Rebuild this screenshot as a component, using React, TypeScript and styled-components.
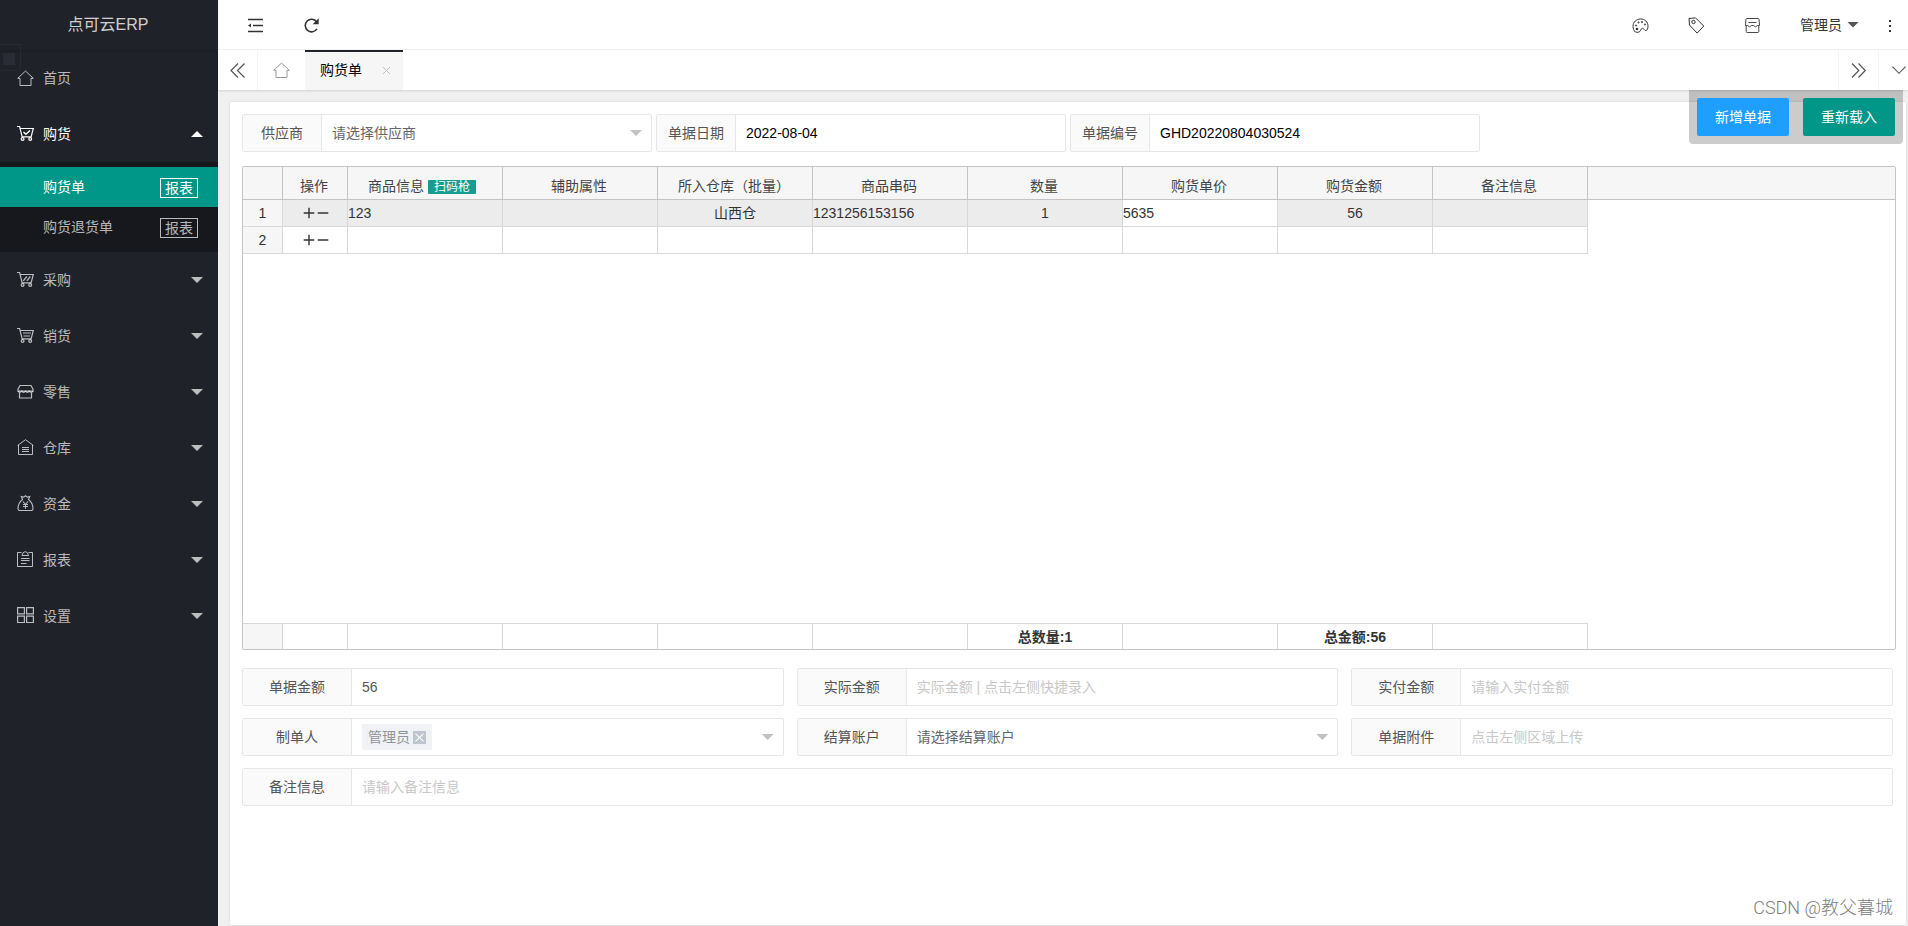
import React from "react";
import styled, { createGlobalStyle, css } from "styled-components";

const GlobalStyle = createGlobalStyle`
  * { box-sizing: border-box; }
  body {
    margin: 0;
    font: 14px/24px "Liberation Sans", "Noto Sans CJK SC", sans-serif;
    color: #333;
    background: #f0f0f0;
  }
  button, input, select { font: inherit; color: inherit; margin: 0; }
  a { color: inherit; text-decoration: none; }
  ul { list-style: none; margin: 0; padding: 0; }
  svg { display: block; flex: none; }
`;

const TEAL = "#009688";

/* ---------- page frame ---------- */

const Page = styled.div`
  display: flex;
  min-height: 100vh;
`;

const Sidebar = styled.aside`
  position: relative;
  flex: 0 0 218px;
  background: #20222a;
  color: rgba(255, 255, 255, 0.7);
`;

const Brand = styled.h1`
  margin: 0;
  height: 50px;
  padding-right: 2px;
  font-size: 16px;
  font-weight: 400;
  line-height: 50px;
  text-align: center;
  color: rgba(255, 255, 255, 0.8);
  box-shadow: 0 1px 2px 0 rgba(0, 0, 0, 0.15);
`;

const DragHandle = styled.div`
  position: absolute;
  top: 44px;
  left: 0;
  width: 21px;
  height: 27px;
  padding: 8px 0 0 3px;
  border: 1px solid #282a32;
  border-left: 0;
  border-radius: 0 0 4px 0;
  &::before {
    content: "";
    display: block;
    width: 12px;
    height: 12px;
    background: #2a2c35;
  }
`;

const Main = styled.main`
  flex: 1;
  min-width: 0;
  display: flex;
  flex-direction: column;
`;

/* ---------- side menu ---------- */

const MenuLink = styled.a<{ $open?: boolean }>`
  display: flex;
  align-items: center;
  gap: 9px;
  height: 56px;
  padding: 0 15px 0 17px;
  color: ${(p) => (p.$open ? "#fff" : "inherit")};
  svg { margin-bottom: 2px; }
`;

const MenuText = styled.span`
  flex: 1;
`;

const Caret = styled.i<{ $up?: boolean; $color?: string }>`
  flex: none;
  width: 12px;
  height: 6px;
  background: ${(p) => p.$color || "currentColor"};
  clip-path: ${(p) => (p.$up ? "polygon(50% 0, 100% 100%, 0 100%)" : "polygon(0 0, 100% 0, 50% 100%)")};
`;

const SubMenu = styled.ul`
  padding: 5px 0;
  background: #17181d;
`;

const SubItem = styled.li<{ $active?: boolean }>`
  display: flex;
  align-items: center;
  justify-content: space-between;
  height: 40px;
  padding: 0 20px 0 43px;
  ${(p) => p.$active && css`background: ${TEAL}; color: #fff;`}
`;

const ReportLink = styled.a`
  margin-top: 2px;
  padding: 0 4px;
  border: 1px solid currentColor;
  line-height: 18px;
`;

/* ---------- header and tabs ---------- */

const Header = styled.header`
  display: flex;
  align-items: center;
  height: 50px;
  padding: 0 16px 0 29px;
  background: #fff;
  border-bottom: 1px solid #f4f4f4;
`;

const IconButton = styled.button`
  display: flex;
  padding: 0;
  border: 0;
  background: none;
  color: #333;
`;

const HeaderLeft = styled.div`
  display: flex;
  align-items: center;
  gap: 39px;
  padding-top: 2px;
`;

const HeaderRight = styled.div`
  display: flex;
  align-items: center;
  gap: 39px;
  margin-left: auto;
  padding-top: 2px;
`;

const UserButton = styled(IconButton)`
  align-items: center;
  gap: 5px;
  margin-bottom: 2px;
`;

const MoreButton = styled(IconButton)`
  margin-left: -10px;
`;

const TabBar = styled.nav`
  position: relative;
  z-index: 1;
  display: flex;
  height: 40px;
  background: #fff;
  box-shadow: 0 1px 2px 0 rgba(0, 0, 0, 0.12);
`;

const TabControl = styled.button<{ $side: "left" | "right" }>`
  display: flex;
  align-items: center;
  justify-content: center;
  width: 40px;
  padding: 0;
  border: 0 solid #f4f4f4;
  border-${(p) => (p.$side === "left" ? "right" : "left")}-width: 1px;
  background: none;
  color: #555;
`;

const HomeTab = styled.a`
  display: flex;
  align-items: center;
  padding: 0 15px 2px;
  color: #999;
`;

const ActiveTab = styled.div`
  display: flex;
  align-items: center;
  justify-content: space-between;
  flex: 0 0 98px;
  padding: 0 12px 2px 15px;
  border-top: 2px solid #20222a;
  background: #f6f6f6;
  color: #000;
  white-space: nowrap;
`;

const TabSpacer = styled.div`
  flex: 1;
`;

const TabDropdown = styled(TabControl)`
  width: 30px;
  justify-content: flex-end;
  padding-right: 1px;
`;

/* ---------- content ---------- */

const Content = styled.div`
  position: relative;
  flex: 1;
  display: flex;
  padding: 12px 2px 1px 12px;
`;

const Card = styled.section`
  flex: 1;
  min-width: 0;
  padding: 12px 10px 12px 12px;
  border-radius: 2px;
  background: #fff;
  box-shadow: 0 0 3px 0 rgba(0, 0, 0, 0.12);
`;

const FloatingActions = styled.div`
  position: absolute;
  top: 0;
  right: 5px;
  display: flex;
  gap: 14px;
  padding: 8px;
  border-radius: 0 0 4px 4px;
  background: rgba(0, 0, 0, 0.2);
`;

const ActionButton = styled.button<{ $color: string }>`
  width: 92px;
  height: 38px;
  padding: 0;
  border: 0;
  border-radius: 2px;
  background: ${(p) => p.$color};
  color: #fff;
`;

const FilterRow = styled.div`
  display: grid;
  grid-template-columns: repeat(4, 1fr);
  gap: 4px;
  margin: 0 2px 14px 0;
`;

const FormGrid = styled.div`
  display: grid;
  grid-template-columns: repeat(3, 1fr);
  gap: 12px 13px;
  margin: 18px 3px 0 0;
`;

const FieldBox = styled.div<{ $wide?: boolean }>`
  display: flex;
  height: 38px;
  border: 1px solid #e6e6e6;
  border-radius: 2px;
  background: #fff;
  ${(p) => p.$wide && css`grid-column: 1 / -1;`}
`;

const FieldLabel = styled.label<{ $width: number }>`
  flex: 0 0 ${(p) => p.$width}px;
  border-right: 1px solid #e6e6e6;
  background: #fafafa;
  color: #555;
  line-height: 36px;
  text-align: center;
`;

const control = css`
  flex: 1;
  min-width: 0;
  padding: 0 10px;
  border: 0;
  outline: 0;
  background: transparent;
`;

const TextInput = styled.input<{ $strong?: boolean }>`
  ${control}
  color: ${(p) => (p.$strong ? "#000" : "#555")};
  &::placeholder { color: #c8c8c8; opacity: 1; }
`;

const SelectWrap = styled.div`
  flex: 1;
  min-width: 0;
  display: flex;
  align-items: center;
  padding-right: 9px;
`;

const Select = styled.select`
  ${control}
  appearance: none;
  height: 100%;
  color: #666;
`;

const TagArea = styled.div`
  flex: 1;
  padding-left: 10px;
`;

const Tag = styled.span`
  display: inline-flex;
  align-items: center;
  gap: 3px;
  height: 26px;
  padding: 0 6px;
  border-radius: 2px;
  background: #f0f2f5;
  color: #909399;
  vertical-align: middle;
`;

const TagRemove = styled.button`
  display: flex;
  align-items: center;
  justify-content: center;
  width: 13px;
  height: 13px;
  padding: 0;
  border: 0;
  background: #c0c4cc;
  color: #fff;
`;

/* ---------- goods grid ---------- */

const GridFrame = styled.div`
  display: flex;
  flex-direction: column;
  justify-content: space-between;
  min-height: 484px;
  border: 1px solid #c4c4c4;
  border-radius: 2px;
  overflow: hidden;
`;

const GridTable = styled.table`
  width: 100%;
  table-layout: fixed;
  border-collapse: separate;
  border-spacing: 0;
`;

const Col = styled.col<{ $w?: number }>`
  ${(p) => p.$w && css`width: ${p.$w}px;`}
`;

const HeadCell = styled.th<{ $last?: boolean }>`
  height: 33px;
  padding: 6px 2px 0 0;
  border: 0 solid #c4c4c4;
  border-width: 0 ${(p) => (p.$last ? 0 : 1)}px 1px 0;
  background: #f6f6f6;
  color: #444;
  font-weight: 400;
  line-height: 20px;
  white-space: nowrap;
`;

const Cell = styled.td<{ $left?: boolean; $tone?: string }>`
  height: 27px;
  padding: 0;
  border: 0 solid #d8d8d8;
  border-width: 0 1px 1px 0;
  background: ${(p) => p.$tone || "#fff"};
  line-height: 20px;
  text-align: ${(p) => (p.$left ? "left" : "center")};
`;

const FootCell = styled.td<{ $tone?: string }>`
  height: 26px;
  padding: 0;
  border: 0 solid #d8d8d8;
  border-width: 1px 1px 0 0;
  background: ${(p) => p.$tone || "#fff"};
  font-weight: 700;
  line-height: 20px;
  text-align: center;
`;

const EmptyCell = styled.td`
  padding: 0;
`;

const CellInput = styled.input`
  display: block;
  width: 100%;
  height: 20px;
  padding: 0;
  border: 0;
  outline: 0;
  background: transparent;
`;

const ScanButton = styled.button`
  height: 14px;
  margin: 0 4px;
  padding: 0 6px;
  border: 0;
  border-radius: 1px;
  background: #179c90;
  color: #fff;
  font-size: 12px;
  line-height: 14px;
  vertical-align: 0;
`;

const RowActions = styled.div`
  display: flex;
  justify-content: center;
  gap: 2px;
  padding: 0 0 1px 2px;
`;

const Watermark = styled.div`
  position: absolute;
  right: 15px;
  bottom: 6px;
  font: 300 18px/24px Roboto, "Noto Sans CJK SC", sans-serif;
  color: #808080;
`;

/* ---------- icons ---------- */

type IconProps = { size?: number; weight?: number; children: React.ReactNode };

const Icon = ({ size = 17, weight = 1, children }: IconProps) => (
  <svg width={size} height={size} viewBox="0 0 17 17" fill="none" stroke="currentColor" strokeWidth={weight} aria-hidden="true">
    {children}
  </svg>
);

const HomeIcon = () => (
  <Icon><path d="M.7 9.300 8.500 2l7.800 7.300H14v7.200H3V9.300z" /></Icon>
);

const Cart = ({ children }: { children: React.ReactNode }) => (
  <Icon weight={1.200}>
    <path d="M0 1.500h2.600l2.600 10.300h8.900L16.300 3.500H3.200" />
    <circle cx="5.600" cy="14" r="1.400" />
    <circle cx="13.200" cy="14" r="1.400" />
    {children}
  </Icon>
);

const CartCheckIcon = () => <Cart><path d="m6.500 7 2.400 2.300L13 5.500" strokeWidth="1.400" /></Cart>;
const CartSlashIcon = () => <Cart><path d="m6.300 9.800 3.500-4.300M9.800 9.800l3.500-4.300" /></Cart>;
const CartLinesIcon = () => <Cart><path d="M6 6h8M6.500 9h6.600" /></Cart>;

const ShopIcon = () => (
  <Icon weight={1.200}>
    <path d="M3 2.500h11l2 3.600v2.100H1V6.100z" />
    <path d="M1 8.200q1.900 2.400 3.750 0q1.900 2.400 3.750 0q1.900 2.400 3.750 0q1.900 2.400 3.750 0M2.500 9.500v5.500h12V9.500" />
  </Icon>
);

const WarehouseIcon = () => (
  <Icon><path d="M.6 6.500 8.500.7l7.900 5.800M1.500 5.900v9.600h14V5.900M5 8.500h7M5 10.500h7M5 12.500h7" /></Icon>
);

const MoneyIcon = () => (
  <Icon weight={1.100}>
    <path d="M5.500 4.500 4.300 1.600l2.400.5L8.500.8l1.800 1.300 2.400-.5-1.200 2.900c3 2.300 4.500 5.500 4.500 9.300 0 1.200-.4 1.700-1.500 1.700h-12c-1.100 0-1.500-.5-1.500-1.700 0-3.800 1.500-7 4.500-9.300z" />
    <path d="m6 6.500 2.500 3 2.500-3M8.500 9.500v4.300M6 9.500h5M6 11.500h5" />
  </Icon>
);

const ClipboardIcon = () => (
  <Icon><path d="M4.500 1.500h-4v14h15v-14h-4M5 4.500h6.500L10.500 1.800 8.200.6 6 1.800zM4 7.500h8.500M4 9.500h8.500M4 12.500h5.500" /></Icon>
);

const TilesIcon = () => (
  <Icon weight={1.200}><path d="M.6.6h6.800v6.300H.6zM9.600.6h6.800v6.300H9.600zM.6 9.200h6.800v6.300H.6zM9.600 9.200h6.800v6.300H9.600z" /></Icon>
);

const FoldIcon = () => (
  <Icon weight={1.400}>
    <path d="M1 2.500h15M6 8.500h10M1 14.500h15" />
    <path d="m1 8.500 3-2v4z" fill="currentColor" stroke="none" />
  </Icon>
);

const RefreshIcon = () => (
  <Icon weight={1.600}>
    <path d="M13.900 11.900A6.300 6.300 0 1 1 13.600 4.800" />
    <path d="M15.700 1.200v6H9.700z" fill="currentColor" stroke="none" />
  </Icon>
);

const PaletteIcon = () => (
  <Icon>
    <path d="M3.300 15C1.800 13.600 1 11.500 1 9.300 1 5 4.500 2 8.700 2S16 5 16 9.200c0 2.300-.8 4.300-2.300 4.300-1.600 0-1.700-2.200-3.200-2.200-2 0-1.700 4-4.500 4-.9 0-2-.1-2.700-.3z" />
    <circle cx="5" cy="12" r="1.300" fill="currentColor" stroke="none" />
    <circle cx="4" cy="8.500" r=".6" /><circle cx="6.500" cy="5.500" r=".6" /><circle cx="10" cy="5" r=".6" /><circle cx="13" cy="7.500" r=".6" />
  </Icon>
);

const TagIcon = () => (
  <Icon><path d="M1 1.500 7.500.8l8.300 8.300-6.700 7L1.500 8z" /><circle cx="5.500" cy="5" r="1.700" /></Icon>
);

const NoteIcon = () => (
  <Icon weight={0.900}>
    <path d="M2.800 1.500h11.400q.8 0 .9 1l.4 6M1.500 8.500l.4-6q.1-1 .9-1M4.500 5.500h8" />
    <path d="M1.500 8.500h2l2 1.300 2-1.300h2l2 1.300 2-1.300h2M2.200 9v5.500q0 1 1 1h10.600q1 0 1-1V9" />
  </Icon>
);

const MoreIcon = () => (
  <svg width="4" height="16" viewBox="0 0 4 16" fill="currentColor" aria-hidden="true">
    <path d="M1 2h2v2H1zM1 7h2v2H1zM1 12h2v2H1z" />
  </svg>
);

const DoubleLeftIcon = () => <Icon weight={1.200}><path d="m9 1.500-7 7 7 7M15.500 1.500l-7 7 7 7" /></Icon>;
const DoubleRightIcon = () => <Icon weight={1.200}><path d="m2 1.500 6.800 7-6.800 7M8.500 1.500l6.800 7-6.800 7" /></Icon>;
const DownIcon = () => <Icon size={16} weight={1.200}><path d="m1.500 5 7 7 7-7" /></Icon>;
const TagCloseIcon = () => <Icon size={9} weight={2}><path d="m1 1 15 15M16 1 1 16" /></Icon>;
const PlusIcon = () => <Icon size={12} weight={2}><path d="M8.500 1v15M1 8.500h15" /></Icon>;
const MinusIcon = () => <Icon size={12} weight={2}><path d="M1 8.500h15" /></Icon>;

const TabCloseIcon = () => (
  <svg width="9" height="9" viewBox="0 0 9 9" fill="none" stroke="#c2c2c2" aria-hidden="true">
    <path d="m1 1 7 7M8 1 1 8" />
  </svg>
);

/* ---------- data ---------- */

const menu = [
  { text: "首页", icon: <HomeIcon /> },
  { text: "购货", icon: <CartCheckIcon />, children: ["购货单", "购货退货单"] },
  { text: "采购", icon: <CartSlashIcon />, more: true },
  { text: "销货", icon: <CartLinesIcon />, more: true },
  { text: "零售", icon: <ShopIcon />, more: true },
  { text: "仓库", icon: <WarehouseIcon />, more: true },
  { text: "资金", icon: <MoneyIcon />, more: true },
  { text: "报表", icon: <ClipboardIcon />, more: true },
  { text: "设置", icon: <TilesIcon />, more: true },
];

const columns = ["商品信息", "辅助属性", "所入仓库（批量）", "商品串码", "数量", "购货单价", "购货金额", "备注信息"];

const rows = [
  { selected: true, cells: ["123", "", "山西仓", "1231256153156", "1", "5635", "56", ""] },
  { selected: false, cells: ["", "", "", "", "", "", "", ""] },
];

const totals = ["", "", "", "", "总数量:1", "", "总金额:56", ""];

const LEFT_COLUMNS = [0, 3, 5];
const PRICE_COLUMN = 5;

const GridColumns = () => (
  <colgroup>
    <Col $w={40} />
    <Col $w={65} />
    {columns.map((c) => <Col key={c} $w={155} />)}
    <Col />
  </colgroup>
);

type FieldProps = { id: string; label: string; labelWidth?: number; wide?: boolean; children: React.ReactNode };

const Field = ({ id, label, labelWidth = 110, wide, children }: FieldProps) => (
  <FieldBox $wide={wide}>
    <FieldLabel htmlFor={id} $width={labelWidth - 1}>{label}</FieldLabel>
    {children}
  </FieldBox>
);

const SelectField = ({ id, text }: { id: string; text: string }) => (
  <SelectWrap>
    <Select id={id} defaultValue="">
      <option value="">{text}</option>
    </Select>
    <Caret $color="#c2c2c2" />
  </SelectWrap>
);

const GoodsGrid = () => (
  <GridFrame>
    <GridTable>
      <GridColumns />
      <thead>
        <tr>
          <HeadCell />
          <HeadCell>操作</HeadCell>
          {columns.map((c, i) => (
            <HeadCell key={c}>
              {c}
              {i === 0 && <ScanButton type="button">扫码枪</ScanButton>}
            </HeadCell>
          ))}
          <HeadCell $last />
        </tr>
      </thead>
      <tbody>
        {rows.map((row, r) => {
          const tone = row.selected ? "#ececec" : "#fff";
          return (
            <tr key={r}>
              <Cell $tone="#f6f6f6">{r + 1}</Cell>
              <Cell $tone={tone}>
                <RowActions>
                  <IconButton type="button" aria-label="添加行"><PlusIcon /></IconButton>
                  <IconButton type="button" aria-label="删除行"><MinusIcon /></IconButton>
                </RowActions>
              </Cell>
              {row.cells.map((value, i) => {
                const editing = row.selected && i === PRICE_COLUMN;
                return (
                  <Cell key={i} $left={LEFT_COLUMNS.includes(i)} $tone={editing ? "#fff" : tone}>
                    {editing ? <CellInput aria-label={columns[i]} defaultValue={value} /> : value}
                  </Cell>
                );
              })}
              <EmptyCell />
            </tr>
          );
        })}
      </tbody>
    </GridTable>
    <GridTable>
      <GridColumns />
      <tbody>
        <tr>
          <FootCell $tone="#f6f6f6" />
          <FootCell />
          {totals.map((t, i) => <FootCell key={i}>{t}</FootCell>)}
          <EmptyCell />
        </tr>
      </tbody>
    </GridTable>
  </GridFrame>
);

export default function App() {
  return (
    <>
      <GlobalStyle />
      <Page>
        <Sidebar>
          <Brand>点可云ERP</Brand>
          <ul>
            {menu.map((item) => (
              <li key={item.text}>
                <MenuLink href="#" $open={!!item.children}>
                  {item.icon}
                  <MenuText>{item.text}</MenuText>
                  {(item.more || item.children) && <Caret $up={!!item.children} />}
                </MenuLink>
                {item.children && (
                  <SubMenu>
                    {item.children.map((child, i) => (
                      <SubItem key={child} $active={i === 0}>
                        <a href="#">{child}</a>
                        <ReportLink href="#">报表</ReportLink>
                      </SubItem>
                    ))}
                  </SubMenu>
                )}
              </li>
            ))}
          </ul>
          <DragHandle />
        </Sidebar>

        <Main>
          <Header>
            <HeaderLeft>
              <IconButton type="button" aria-label="侧边伸缩"><FoldIcon /></IconButton>
              <IconButton type="button" aria-label="刷新"><RefreshIcon /></IconButton>
            </HeaderLeft>
            <HeaderRight>
              <IconButton type="button" aria-label="主题"><PaletteIcon /></IconButton>
              <IconButton type="button" aria-label="标签"><TagIcon /></IconButton>
              <IconButton type="button" aria-label="便签"><NoteIcon /></IconButton>
              <UserButton type="button">管理员<Caret $color="#555" /></UserButton>
              <MoreButton type="button" aria-label="更多"><MoreIcon /></MoreButton>
            </HeaderRight>
          </Header>

          <TabBar>
            <TabControl type="button" $side="left" aria-label="向左"><DoubleLeftIcon /></TabControl>
            <HomeTab href="#" aria-label="首页"><HomeIcon /></HomeTab>
            <ActiveTab>
              购货单
              <IconButton type="button" aria-label="关闭"><TabCloseIcon /></IconButton>
            </ActiveTab>
            <TabSpacer />
            <TabControl type="button" $side="right" aria-label="向右"><DoubleRightIcon /></TabControl>
            <TabDropdown type="button" $side="right" aria-label="标签操作"><DownIcon /></TabDropdown>
          </TabBar>

          <Content>
            <Card>
              <FilterRow>
                <Field id="supplier" label="供应商" labelWidth={80}>
                  <SelectField id="supplier" text="请选择供应商" />
                </Field>
                <Field id="date" label="单据日期" labelWidth={80}>
                  <TextInput id="date" $strong defaultValue="2022-08-04" />
                </Field>
                <Field id="number" label="单据编号" labelWidth={80}>
                  <TextInput id="number" $strong defaultValue="GHD20220804030524" />
                </Field>
              </FilterRow>

              <GoodsGrid />

              <FormGrid>
                <Field id="total" label="单据金额">
                  <TextInput id="total" defaultValue="56" />
                </Field>
                <Field id="actual" label="实际金额">
                  <TextInput id="actual" placeholder="实际金额 | 点击左侧快捷录入" />
                </Field>
                <Field id="money" label="实付金额">
                  <TextInput id="money" placeholder="请输入实付金额" />
                </Field>
                <Field id="user" label="制单人">
                  <SelectWrap>
                    <TagArea>
                      <Tag>
                        管理员
                        <TagRemove id="user" type="button" aria-label="移除管理员"><TagCloseIcon /></TagRemove>
                      </Tag>
                    </TagArea>
                    <Caret $color="#c2c2c2" />
                  </SelectWrap>
                </Field>
                <Field id="account" label="结算账户">
                  <SelectField id="account" text="请选择结算账户" />
                </Field>
                <Field id="file" label="单据附件">
                  <TextInput id="file" placeholder="点击左侧区域上传" />
                </Field>
                <Field id="remark" label="备注信息" wide>
                  <TextInput id="remark" placeholder="请输入备注信息" />
                </Field>
              </FormGrid>
            </Card>

            <FloatingActions>
              <ActionButton type="button" $color="#1e9fff">新增单据</ActionButton>
              <ActionButton type="button" $color={TEAL}>重新载入</ActionButton>
            </FloatingActions>
            <Watermark>CSDN @教父暮城</Watermark>
          </Content>
        </Main>
      </Page>
    </>
  );
}
